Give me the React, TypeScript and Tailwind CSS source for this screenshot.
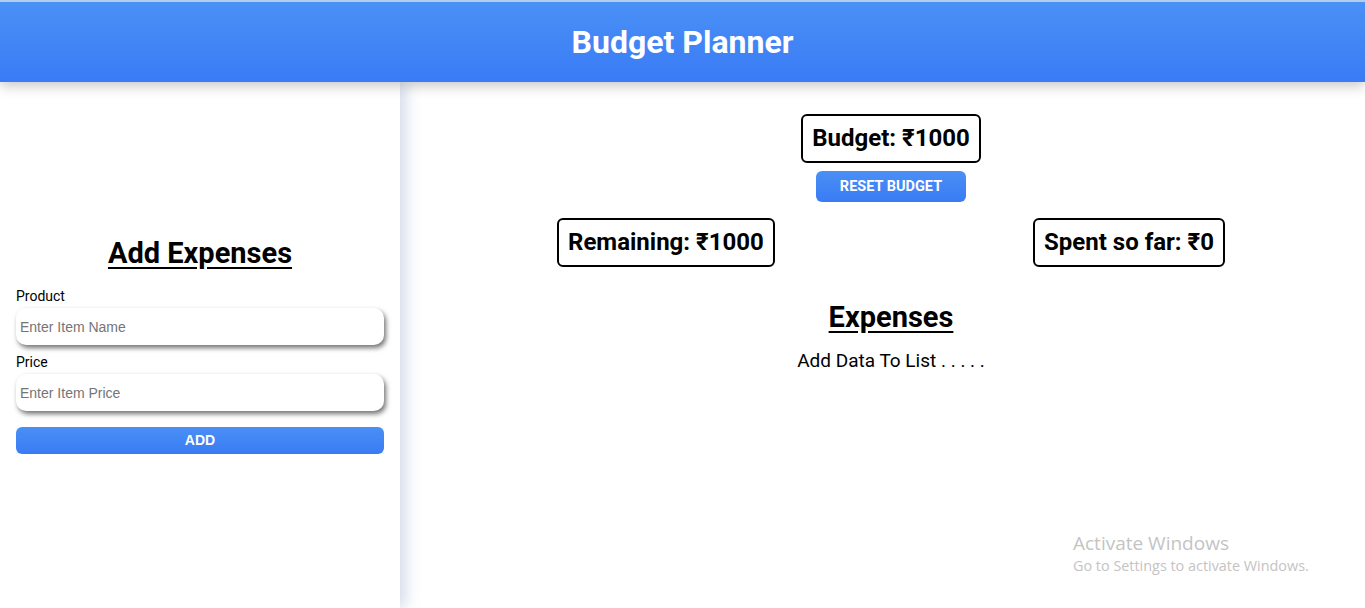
import { useState, ChangeEvent } from "react";

const App = () => {
  const [budget] = useState(1000);
  const [name, setName] = useState("");
  const [price, setPrice] = useState("");

  const handleName = (e: ChangeEvent<HTMLInputElement>) => setName(e.target.value);
  const handlePrice = (e: ChangeEvent<HTMLInputElement>) => setPrice(e.target.value);

  return (
    <div className="relative flex h-screen flex-col overflow-hidden bg-white font-['Roboto',sans-serif] text-black">
      <header className="relative z-20 flex h-[82px] shrink-0 items-center justify-center border-t-2 border-[#b4cde8] bg-gradient-to-b from-[#4a90f6] to-[#3a7bf5] shadow-[0_4px_12px_rgba(0,0,0,0.22)]">
        <h1 className="text-[32px] font-bold text-white">Budget Planner</h1>
      </header>

      <div className="flex flex-1">
        <aside className="relative z-10 flex w-[400px] shrink-0 flex-col justify-center bg-white px-4 pb-[4px] shadow-[6px_0_14px_rgba(60,100,160,0.22)]">
          <h2 className="mb-[12px] text-center text-[29px] font-bold underline underline-offset-[4px]">
            Add Expenses
          </h2>
          <label className="text-[14px] leading-[18px]">Product</label>
          <input
            type="text"
            placeholder="Enter Item Name"
            value={name}
            onChange={handleName}
            className="mt-[3px] h-[37px] w-full rounded-[10px] bg-white px-1 font-['Liberation_Sans',Arial,sans-serif] text-[14px] shadow-[2px_3px_5px_rgba(0,0,0,0.55)] outline-none placeholder:text-[#757575]"
          />
          <label className="mt-[8px] text-[14px] leading-[18px]">Price</label>
          <input
            type="text"
            placeholder="Enter Item Price"
            value={price}
            onChange={handlePrice}
            className="mt-[3px] h-[37px] w-full rounded-[10px] bg-white px-1 font-['Liberation_Sans',Arial,sans-serif] text-[14px] shadow-[2px_3px_5px_rgba(0,0,0,0.55)] outline-none placeholder:text-[#757575]"
          />
          <button
            type="button"
            className="mt-4 h-[27px] w-full rounded-[6px] bg-gradient-to-b from-[#4a8ff6] to-[#3a7bf4] font-['Liberation_Sans',Arial,sans-serif] text-[14px] font-bold text-white"
          >
            ADD
          </button>
        </aside>

        <main className="flex flex-1 flex-col items-center pl-[17px] pt-8">
          <div className="rounded-[6px] border-2 border-black px-[9px] py-[6px] text-[24px] leading-[33px] font-bold">
            Budget: ₹{budget}
          </div>
          <button
            type="button"
            className="mt-2 h-[31px] w-[150px] rounded-[6px] bg-gradient-to-b from-[#4a8ff6] to-[#3a7bf4] text-[14.5px] font-bold text-white"
          >
            RESET BUDGET
          </button>
          <div className="mt-4 flex w-full justify-between px-[140px]">
            <div className="rounded-[6px] border-2 border-black px-[9px] py-[6px] text-[24px] leading-[33px] font-bold">
              Remaining: ₹{budget}
            </div>
            <div className="rounded-[6px] border-2 border-black px-[9px] py-[6px] text-[24px] leading-[33px] font-bold">
              Spent so far: ₹0
            </div>
          </div>
          <h2 className="mt-[29px] text-[29px] font-bold underline underline-offset-[4px]">Expenses</h2>
          <p className="mt-[7px] text-[19px]">Add Data To List . . . . .</p>
        </main>
      </div>

      <div className="pointer-events-none absolute left-[1073px] top-[530px] font-['Open_Sans',sans-serif] text-[#c4c4c4]">
        <div className="text-[19px] leading-[26px]">Activate Windows</div>
        <div className="text-[14.4px] leading-[20px]">Go to Settings to activate Windows.</div>
      </div>
    </div>
  );
};

export default App;
